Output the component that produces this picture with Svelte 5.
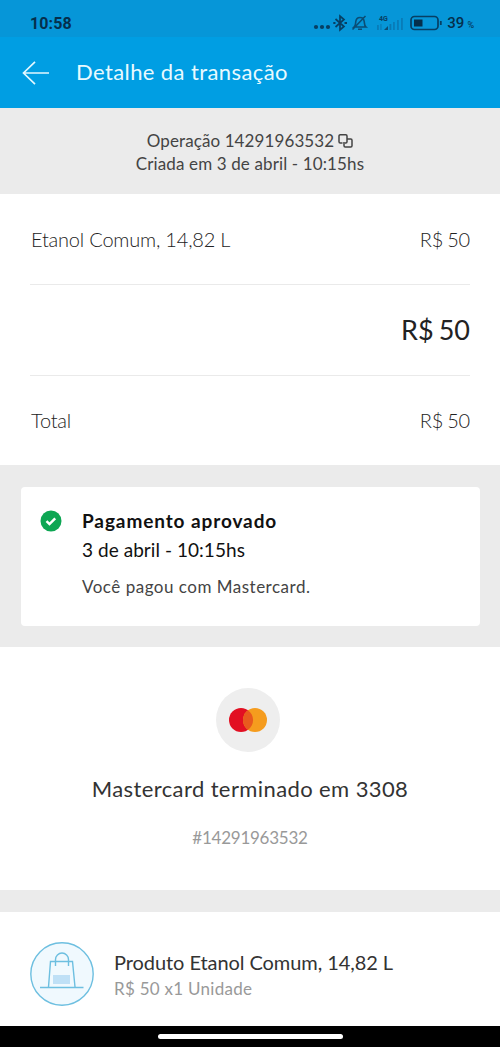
<script lang="ts">
    const operation = '14291963532';
    const createdAt = '3 de abril - 10:15hs';

    const rows = [
        { label: 'Etanol Comum, 14,82 L', amount: 50, big: false },
        { label: '', amount: 50, big: true },
        { label: 'Total', amount: 50, big: false }
    ];
</script>

<div class="screen">
    <div class="status">
        <span class="clock">10:58</span>
        <div class="status-icons">
            <svg width="130" height="22" viewBox="0 0 130 22">
                <g fill="#073f63">
                    <circle cx="3" cy="16" r="2.1" />
                    <circle cx="9" cy="16" r="2.1" />
                    <circle cx="15" cy="16" r="2.1" />
                </g>
                <!-- bluetooth -->
                <g fill="none" stroke="#073f63" stroke-width="1.7">
                    <path d="M22.500 8l8.500 7.500-4 3.500V5l4 3.500-8.500 7.500" />
                    <path d="M20.300 12h2.200M31.500 12h2.500" stroke-width="2.200" />
                </g>
                <!-- muted bell -->
                <g fill="none" stroke="#0b4d75" stroke-width="1.6">
                    <path d="M41 16c1.800-1.500 1.500-3 1.700-5 .3-3 2-4.500 4.300-4.500s4 1.500 4.300 4.500c.2 2 0 3.500 1.700 5zM39.500 18.500L52.500 5M45 18.300h4" />
                </g>
                <text x="66" y="9.500" class="net">4G</text>
                <g fill="#0a6ba3">
                    <rect x="64" y="14" width="1.800" height="5" opacity=".6" />
                    <rect x="67" y="13" width="1.800" height="6" opacity=".4" />
                    <path d="M71 19l4-4v4z" fill="#0b4d75" />
                    <rect x="76.500" y="13" width="1.800" height="6" opacity=".7" />
                    <rect x="80" y="11" width="1.800" height="8" opacity=".6" />
                    <rect x="84" y="9" width="1.800" height="10" opacity=".6" />
                    <rect x="88" y="7" width="1.800" height="12" opacity=".6" />
                </g>
                <!-- battery -->
                <rect x="98" y="5.500" width="27" height="13" rx="3.500" fill="none" stroke="#073f63" stroke-width="1.700" />
                <rect x="101" y="8.500" width="8.500" height="7" fill="#052f4c" />
                <path d="M127.800 10v4" stroke="#073f63" stroke-width="1.800" />
            </svg>
            <span class="percent">39</span><span class="sign">%</span>
        </div>
    </div>

    <header>
        <svg width="28" height="24" viewBox="0 0 28 24" fill="none" stroke="#e2f8ff" stroke-width="1.700">
            <path d="M27 12H1.500M13 .8L1.500 12 13 23.200" />
        </svg>
        <h1>Detalhe da transação</h1>
    </header>

    <section class="info">
        <p class="op">
            <span>Operação {operation}</span>
            <svg width="15" height="14" viewBox="0 0 15 14" fill="none" stroke="#444" stroke-width="1.500">
                <path d="M4.500 9H2.200a1.200 1.200 0 0 1-1.200-1.200V2a1.200 1.200 0 0 1 1.200-1.200h5.600A1.200 1.200 0 0 1 9 2v5.800A1.200 1.200 0 0 1 7.800 9h-1" />
                <path d="M9 5h3.800A1.200 1.200 0 0 1 14 6.200v5.600a1.200 1.200 0 0 1-1.200 1.200H7.200A1.200 1.200 0 0 1 6 11.800V8" />
            </svg>
        </p>
        <p class="created">Criada em {createdAt}</p>
    </section>

    <section class="rows">
        {#each rows as row}
            <div class="row" class:big={row.big}>
                <span class="label">{row.label}</span>
                <span class="amount"><span>R$</span><span>{row.amount}</span></span>
            </div>
        {/each}
    </section>

    <section class="payment">
        <div class="card">
            <svg width="22" height="22" viewBox="0 0 22 22">
                <circle cx="11" cy="11" r="10.500" fill="#0da653" />
                <path d="M6.500 11.200l3 2.900 5.700-5.700" fill="none" stroke="#fff" stroke-width="2.500" />
            </svg>
            <div>
                <h2>Pagamento aprovado</h2>
                <p class="when">{createdAt}</p>
                <p class="how">Você pagou com Mastercard.</p>
            </div>
        </div>
    </section>

    <section class="method">
        <svg width="64" height="64" viewBox="0 0 64 64">
            <circle cx="32" cy="32" r="32" fill="#eee" />
            <circle cx="25" cy="32" r="12" fill="#e20f22" />
            <circle cx="39" cy="32" r="12" fill="#f59c1e" />
            <path d="M32 22.200a12 12 0 0 1 0 19.600a12 12 0 0 1 0-19.600z" fill="#e85a1e" />
        </svg>
        <p class="ending">Mastercard terminado em 3308</p>
        <p class="number">#{operation}</p>
    </section>

    <section class="product">
        <svg width="64" height="64" viewBox="0 0 64 64" fill="none" stroke="#6dbfe0" stroke-width="1.400">
            <circle cx="32" cy="32" r="31.200" fill="#f0f9fe" />
            <path d="M10 45.500h43.500" />
            <path d="M18.500 45l2-25.500h22L45 45" />
            <path d="M25.500 24v-6.500a6.500 6.500 0 0 1 13 0V24" />
            <rect x="23" y="33" width="17" height="9" fill="#bfe0f6" stroke="none" />
        </svg>
        <div>
            <p class="name">Produto Etanol Comum, 14,82 L</p>
            <p class="qty">R$ 50 x1 Unidade</p>
        </div>
    </section>

    <div class="navbar"><span></span></div>
</div>

<style>
    :global(body) {
        margin: 0;
        background: #fff;
    }
    .screen {
        width: 500px;
        height: 1047px;
        display: flex;
        flex-direction: column;
        overflow: hidden;
        font-family: Lato, "Open Sans", sans-serif;
        color: #333;
        background: #fff;
        white-space: nowrap;
    }
    h1, h2, p {
        margin: 0;
        font-weight: 400;
    }
    svg {
        display: block;
        flex: none;
    }
    .status {
        height: 37px;
        box-sizing: border-box;
        padding: 9px 26px 0 30px;
        display: flex;
        justify-content: space-between;
        background: #0696d8;
        color: #052f4c;
        font-family: Roboto, sans-serif;
    }
    .clock {
        font-size: 16px;
        line-height: 29px;
        font-weight: 700;
        letter-spacing: 0.1px;
    }
    .status-icons {
        display: flex;
        padding-top: 2px;
    }
    .net {
        font: 700 7px Roboto, sans-serif;
        fill: #073f63;
    }
    .percent {
        margin-left: 4px;
        font-size: 15px;
        line-height: 25px;
        font-weight: 500;
    }
    .sign {
        margin-left: 3px;
        font-size: 9px;
        line-height: 29px;
    }
    header {
        height: 71px;
        display: flex;
        align-items: center;
        padding-left: 22px;
        background: #009ee3;
    }
    h1 {
        margin: -2px 0 0 26px;
        font-size: 22px;
        letter-spacing: 0.4px;
        color: #e8faff;
    }
    .info {
        height: 86px;
        box-sizing: border-box;
        padding-top: 21px;
        background: #ebebeb;
        text-align: center;
        font-size: 17px;
        line-height: 23px;
        color: #444;
    }
    .op {
        display: flex;
        justify-content: center;
        align-items: center;
        gap: 4px;
        letter-spacing: 0.1px;
    }
    .created {
        letter-spacing: 0.13px;
    }
    .rows {
        height: 271px;
        padding: 0 30px;
        display: grid;
        grid-template-rows: 91px 91px 89px;
    }
    .row {
        display: flex;
        justify-content: space-between;
        align-items: center;
        border-bottom: 1px solid #eaeaea;
        font-size: 20px;
        font-weight: 300;
        letter-spacing: -0.2px;
        color: #222;
    }
    .row:last-child {
        border-bottom: none;
    }
    .label {
        padding: 0 0 1px 1px;
    }
    .amount {
        display: flex;
        gap: 4px;
        padding-bottom: 1px;
    }
    .big {
        font-size: 27px;
        font-weight: 400;
        letter-spacing: 0;
    }
    .big .amount {
        gap: 5px;
    }
    .payment {
        height: 182px;
        box-sizing: border-box;
        padding: 22px 20px 21px 21px;
        background: #ebebeb;
    }
    .card {
        height: 139px;
        box-sizing: border-box;
        display: flex;
        gap: 20px;
        padding: 20px 19px;
        border-radius: 4px;
        background: #fff;
    }
    .card svg {
        margin-top: 3px;
    }
    h2 {
        font-size: 19px;
        line-height: 28px;
        font-weight: 700;
        letter-spacing: 0.9px;
        color: #111;
    }
    .when {
        font-size: 19px;
        line-height: 29px;
        letter-spacing: 0.05px;
        color: #111;
    }
    .how {
        margin-top: 9px;
        font-size: 17px;
        line-height: 27px;
        letter-spacing: 0.5px;
        color: #444;
    }
    .method {
        height: 243px;
        box-sizing: border-box;
        padding-top: 41px;
        display: flex;
        flex-direction: column;
        align-items: center;
    }
    .method svg {
        margin-right: 4px;
    }
    .ending {
        margin-top: 22px;
        font-size: 22px;
        line-height: 30px;
        letter-spacing: 0.4px;
    }
    .number {
        margin-top: 22px;
        font-size: 17px;
        line-height: 24px;
        letter-spacing: -0.25px;
        color: #999;
    }
    .product {
        height: 136px;
        box-sizing: border-box;
        border-top: 22px solid #ebebeb;
        padding: 30px 30px 0;
        display: flex;
        gap: 20px;
    }
    .name {
        margin-top: 6px;
        font-size: 20px;
        line-height: 28px;
        letter-spacing: -0.07px;
    }
    .qty {
        font-size: 17px;
        line-height: 25px;
        letter-spacing: 0.27px;
        color: #999;
    }
    .navbar {
        height: 21px;
        display: flex;
        justify-content: center;
        background: #000;
    }
    .navbar span {
        width: 185px;
        height: 5px;
        margin-top: 8px;
        border-radius: 3px;
        background: #fff;
    }
</style>
